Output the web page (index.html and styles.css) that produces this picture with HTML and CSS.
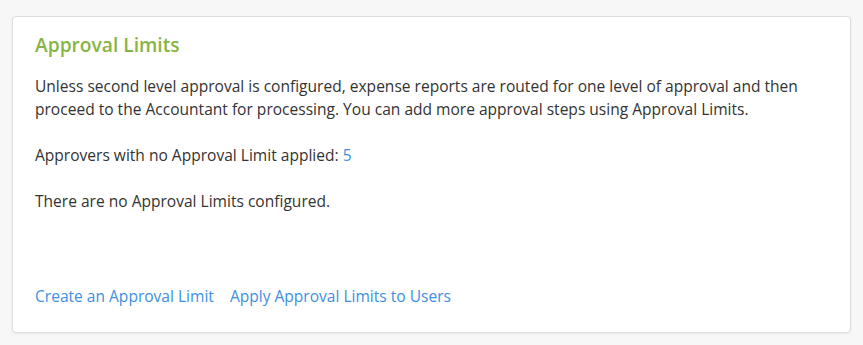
FILE: index.html
```html
<!DOCTYPE html>
<html lang="en">

<head>
    <meta charset="UTF-8">
    <meta name="viewport" content="width=device-width, initial-scale=1.0">
    <title>Approval Limits</title>
    <link rel="stylesheet" href="styles.css">
</head>

<body>
    <div class="panel">
        <h2 class="panel-title">Approval Limits</h2>
        <p>
            Unless second level approval is configured, expense reports are routed for one level of approval and then
            proceed to the Accountant for processing. You can add more approval steps using Approval Limits.
        </p>
        <p>Approvers with no Approval Limit applied: <a href="#">5</a></p>
        <p>There are no Approval Limits configured.</p>
        <div class="actions">
            <a href="#">Create an Approval Limit</a>
            <a href="#">Apply Approval Limits to Users</a>
        </div>
    </div>
</body>

</html>
```

FILE: styles.css
```css
body {
    margin: 0;
    padding: 16px 12px 12px 12px;
    background-color: #f7f7f7;
    font-family: "Open Sans", "Noto Sans", sans-serif;
    font-size: 15.55px;
    color: #333;
}

.panel {
    display: flex;
    flex-direction: column;
    height: 317px;
    box-sizing: border-box;
    padding: 15px 22px 25px 22px;
    background-color: #fff;
    border: 1px solid #dedede;
    border-radius: 4px;
    box-shadow: 0 1px 3px rgba(0, 0, 0, 0.06);
}

.panel-title {
    margin: 0 0 17px 0;
    font-size: 19.2px;
    line-height: 26px;
    font-weight: 600;
    color: #88b444;
}

p {
    margin: 0 0 23px 0;
    line-height: 23px;
}

a {
    color: #4090e0;
    text-decoration: none;
}

.actions {
    margin-top: auto;
    display: flex;
    gap: 16px;
}
```
